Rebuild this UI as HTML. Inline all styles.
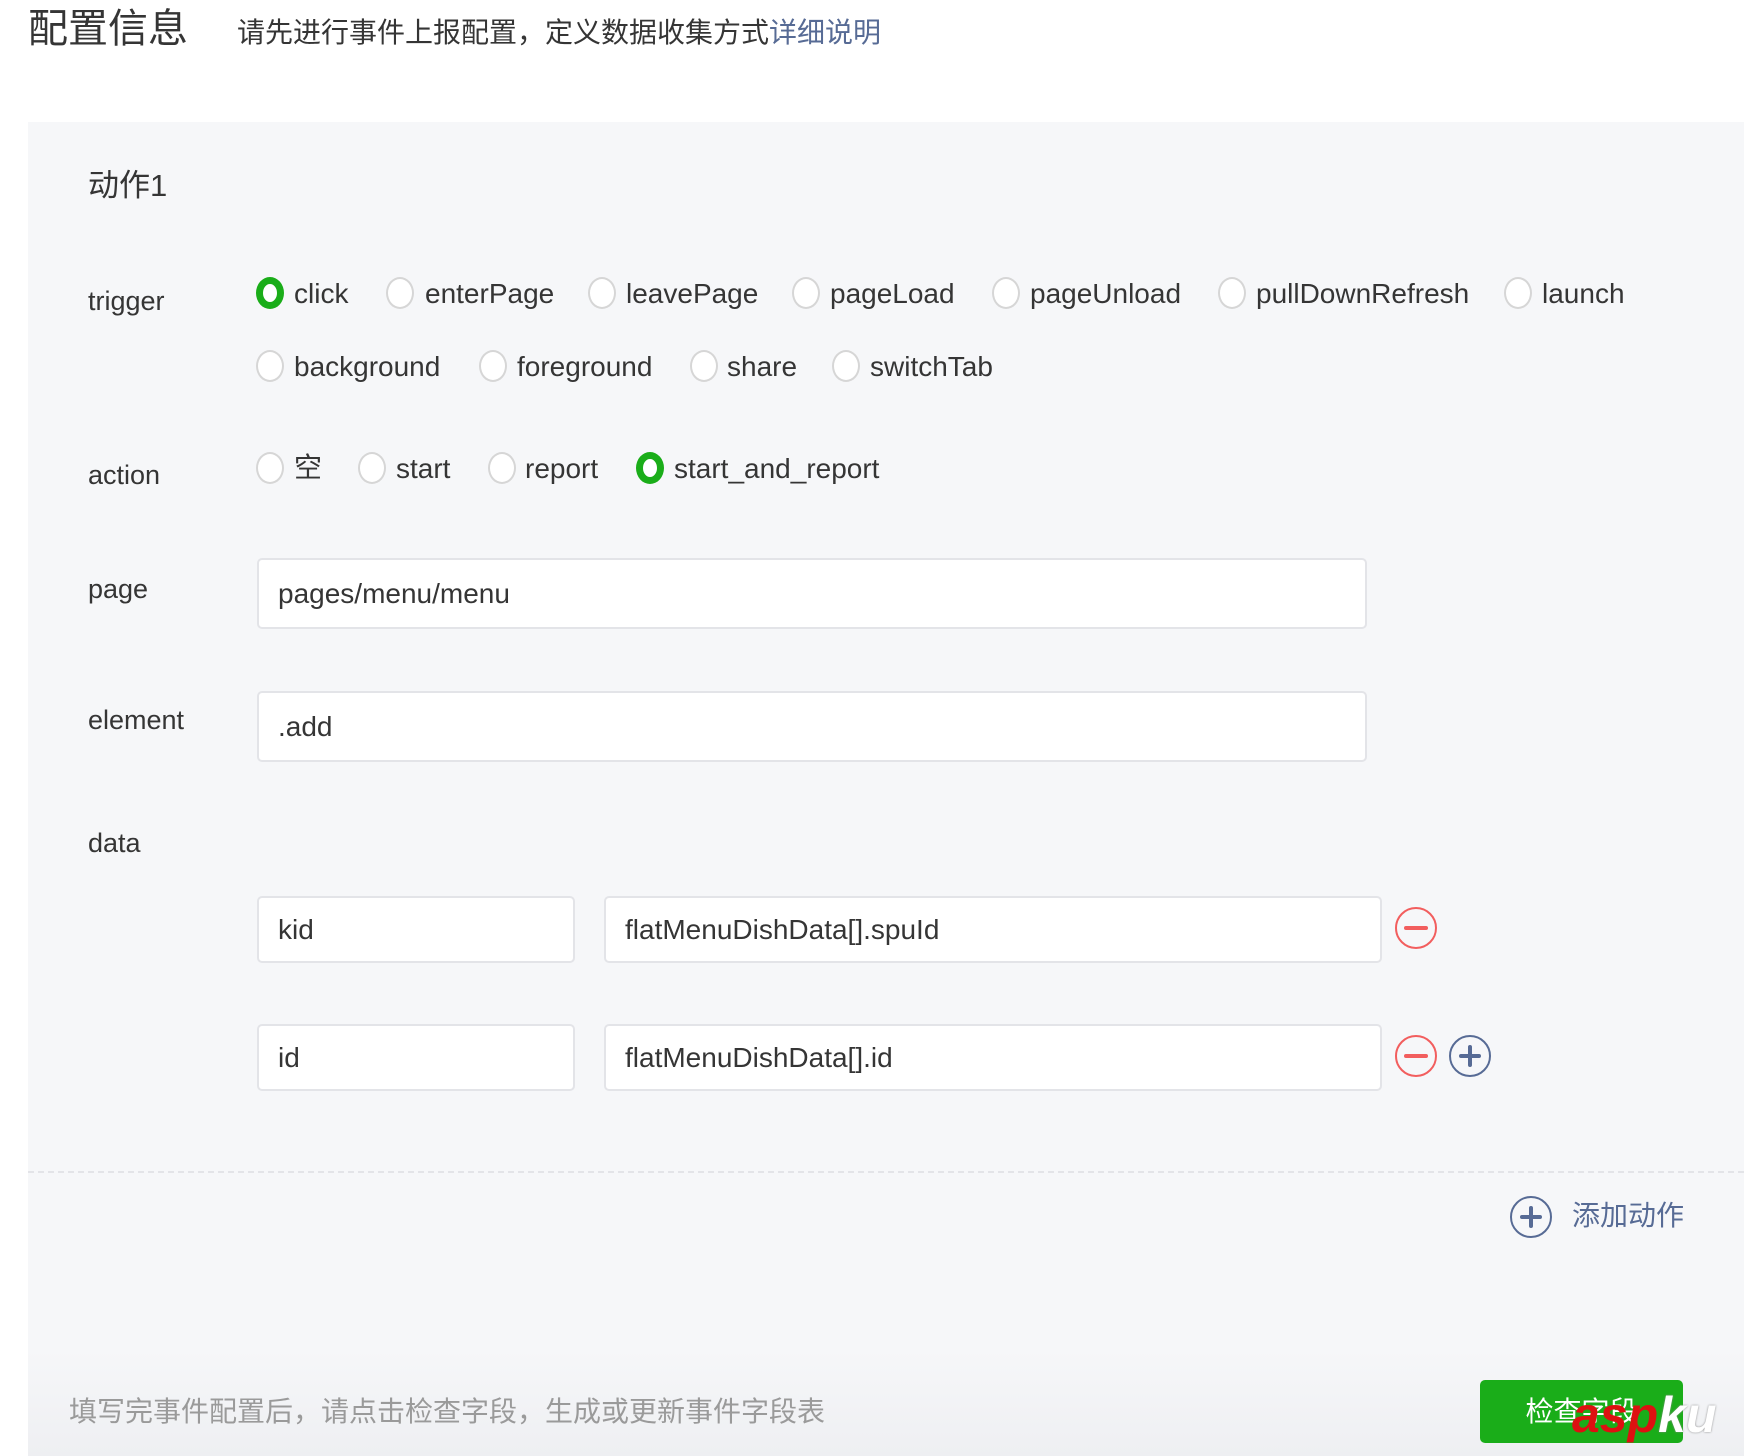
<!DOCTYPE html>
<html><head><meta charset="utf-8"><style>
*{margin:0;padding:0;box-sizing:border-box}
body{width:1744px;height:1456px;background:#fff;position:relative;overflow:hidden;font-family:"Liberation Sans","Noto Sans CJK SC",sans-serif;color:#353535}
.a{position:absolute;white-space:nowrap;line-height:1}
.panel{position:absolute;left:28px;top:122px;right:0;bottom:0;background:linear-gradient(#f6f7f9 0,#f6f7f9 92%,#eeeff2 100%)}
.lbl{font-size:27px;left:88px}
.r{position:absolute;width:28px;height:32px;border:2px solid #d6d6d6;border-radius:50%;background:#fff}
.r.on{border:7px solid #1aad19}
.t{font-size:28px}
.inp{position:absolute;background:#fff;border:2px solid #e3e4e8;border-radius:5px;font-size:28px;padding-left:19px;display:flex;align-items:center}
</style></head><body>
<div class="a" style="left:28px;top:9px;font-size:40px;color:#353535">配置信息</div>
<div class="a" style="left:237px;top:19px;font-size:28px">请先进行事件上报配置，定义数据收集方式<span style="color:#576b95">详细说明</span></div>
<div class="panel"></div>
<div class="a" style="left:88px;top:170px;font-size:31px">动作1</div>
<div class="a lbl" style="top:288px">trigger</div>
<div class="a lbl" style="top:462px">action</div>
<div class="a lbl" style="top:576px">page</div>
<div class="a lbl" style="top:707px">element</div>
<div class="a lbl" style="top:830px">data</div>

<div class="r on" style="left:256px;top:277px"></div><div class="a t" style="left:294px;top:280px">click</div>
<div class="r" style="left:386px;top:277px"></div><div class="a t" style="left:425px;top:280px">enterPage</div>
<div class="r" style="left:588px;top:277px"></div><div class="a t" style="left:626px;top:280px">leavePage</div>
<div class="r" style="left:792px;top:277px"></div><div class="a t" style="left:830px;top:280px">pageLoad</div>
<div class="r" style="left:992px;top:277px"></div><div class="a t" style="left:1030px;top:280px">pageUnload</div>
<div class="r" style="left:1218px;top:277px"></div><div class="a t" style="left:1256px;top:280px">pullDownRefresh</div>
<div class="r" style="left:1504px;top:277px"></div><div class="a t" style="left:1542px;top:280px">launch</div>

<div class="r" style="left:256px;top:350px"></div><div class="a t" style="left:294px;top:353px">background</div>
<div class="r" style="left:479px;top:350px"></div><div class="a t" style="left:517px;top:353px">foreground</div>
<div class="r" style="left:690px;top:350px"></div><div class="a t" style="left:727px;top:353px">share</div>
<div class="r" style="left:832px;top:350px"></div><div class="a t" style="left:870px;top:353px">switchTab</div>

<div class="r" style="left:256px;top:452px"></div><div class="a t" style="left:294px;top:454px">空</div>
<div class="r" style="left:358px;top:452px"></div><div class="a t" style="left:396px;top:455px">start</div>
<div class="r" style="left:488px;top:452px"></div><div class="a t" style="left:525px;top:455px">report</div>
<div class="r on" style="left:636px;top:452px"></div><div class="a t" style="left:674px;top:455px">start_and_report</div>

<div class="inp" style="left:257px;top:558px;width:1110px;height:71px">pages/menu/menu</div>
<div class="inp" style="left:257px;top:691px;width:1110px;height:71px">.add</div>
<div class="inp" style="left:257px;top:896px;width:318px;height:67px">kid</div>
<div class="inp" style="left:604px;top:896px;width:778px;height:67px">flatMenuDishData[].spuId</div>
<div class="inp" style="left:257px;top:1024px;width:318px;height:67px">id</div>
<div class="inp" style="left:604px;top:1024px;width:778px;height:67px">flatMenuDishData[].id</div>

<svg class="a" style="left:1394px;top:906px" width="44" height="44"><circle cx="22" cy="22" r="20" fill="none" stroke="#f25e5e" stroke-width="2"/><line x1="12" y1="22" x2="32" y2="22" stroke="#f25e5e" stroke-width="4" stroke-linecap="round"/></svg>
<svg class="a" style="left:1394px;top:1034px" width="44" height="44"><circle cx="22" cy="22" r="20" fill="none" stroke="#f25e5e" stroke-width="2"/><line x1="12" y1="22" x2="32" y2="22" stroke="#f25e5e" stroke-width="4" stroke-linecap="round"/></svg>
<svg class="a" style="left:1448px;top:1034px" width="44" height="44"><circle cx="22" cy="22" r="20" fill="none" stroke="#576b95" stroke-width="2"/><path d="M13 22H31M22 13V31" stroke="#576b95" stroke-width="4" stroke-linecap="round"/></svg>

<div class="a" style="left:28px;right:0;top:1171px;border-top:2px dashed #e3e4e8"></div>
<svg class="a" style="left:1509px;top:1195px" width="44" height="44"><circle cx="22" cy="22" r="20" fill="none" stroke="#576b95" stroke-width="2"/><path d="M13 22H31M22 13V31" stroke="#576b95" stroke-width="4" stroke-linecap="round"/></svg>
<div class="a" style="left:1572px;top:1202px;font-size:28px;color:#576b95">添加动作</div>

<div class="a" style="left:69px;top:1398px;font-size:28px;color:#9a9a9a">填写完事件配置后，请点击检查字段，生成或更新事件字段表</div>
<div class="a" style="left:1480px;top:1380px;width:203px;height:63px;background:#1aad19;border-radius:5px;color:#fff;font-size:28px;display:flex;align-items:center;justify-content:center">检查字段</div>
<div class="a" style="left:1572px;top:1390px;font-size:50px;font-weight:bold;font-style:italic;color:#d11;">asp<span style="color:#fff;text-shadow:0 0 2px #888">ku</span></div>
</body></html>
